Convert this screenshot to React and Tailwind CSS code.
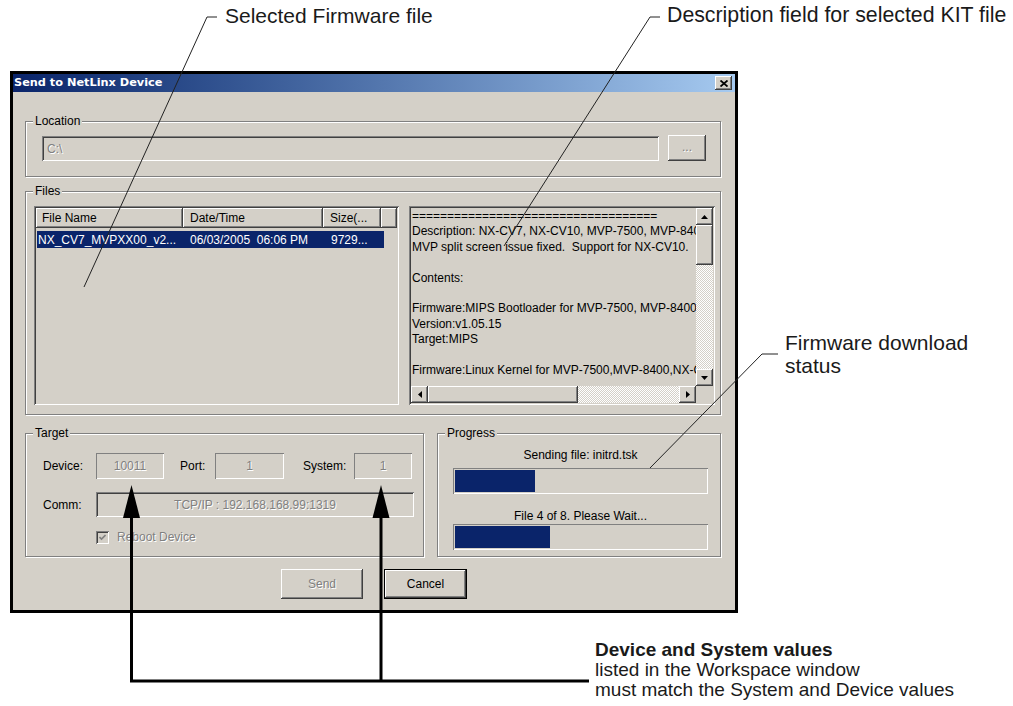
const sunken =
  "shadow-[inset_1px_1px_0_#808080,inset_-1px_-1px_0_#ffffff,inset_2px_2px_0_#404040,inset_-2px_-2px_0_#d4d0c8]";
const raised =
  "shadow-[inset_-1px_-1px_0_#404040,inset_1px_1px_0_#ffffff,inset_-2px_-2px_0_#808080,inset_2px_2px_0_#d4d0c8]";
const edge = "shadow-[inset_1px_1px_0_#808080,inset_-1px_-1px_0_#ffffff]";
const dim = "text-[#808080] [text-shadow:1px_1px_0_#ffffff]";
const checker =
  "bg-[repeating-conic-gradient(#d4d0c8_0%_25%,#ffffff_0%_50%)] bg-[length:2px_2px]";

function Tri({ dir }) {
  const horiz = dir === "left" || dir === "right";
  const pts = {
    up: "0,4 3.5,0 7,4",
    down: "0,0 7,0 3.5,4",
    left: "4,0 4,7 0,3.5",
    right: "0,0 0,7 4,3.5",
  }[dir];
  return (
    <svg width={horiz ? 4 : 7} height={horiz ? 7 : 4} viewBox={horiz ? "0 0 4 7" : "0 0 7 4"}>
      <polygon points={pts} fill="#000" />
    </svg>
  );
}

function ScrollBtn({ dir }) {
  return (
    <div className={`flex h-[17px] w-[17px] shrink-0 items-center justify-center bg-[#d4d0c8] ${raised}`}>
      <Tri dir={dir} />
    </div>
  );
}

function Group({ label, className, children }) {
  return (
    <div className={`relative border border-[#808080] shadow-[inset_1px_1px_0_#ffffff,1px_1px_0_#ffffff] ${className}`}>
      <span className="absolute -top-[8px] left-[7px] bg-[#d4d0c8] px-[2px] leading-[14px]">{label}</span>
      {children}
    </div>
  );
}

const descLines = [
  "===================================",
  "Description: NX-CV7, NX-CV10, MVP-7500, MVP-8400",
  "MVP split screen issue fixed.  Support for NX-CV10.",
  "",
  "Contents:",
  "",
  "Firmware:MIPS Bootloader for MVP-7500, MVP-8400",
  "Version:v1.05.15",
  "Target:MIPS",
  "",
  "Firmware:Linux Kernel for MVP-7500,MVP-8400,NX-CV7",
];

function Dialog() {
  return (
    <div className="flex h-[542px] w-[728px] flex-col border-[3px] border-black bg-[#d4d0c8] text-[12px] text-black">
      {/* title bar */}
      <div className="flex h-[18px] items-center justify-between bg-linear-to-r from-[#0a246a] to-[#a6caf0] pl-[1px] pr-[3px]">
        <span className="font-['DejaVu_Sans',sans-serif] text-[11.3px] font-bold text-white">Send to NetLinx Device</span>
        <div className={`flex h-[14px] w-[17px] items-center justify-center bg-[#d4d0c8] ${raised}`}>
          <svg width="8" height="7" viewBox="0 0 8 7">
            <path d="M0.5 0.5 L7.5 6.5 M7.5 0.5 L0.5 6.5" stroke="#000" strokeWidth="1.8" />
          </svg>
        </div>
      </div>

      <div className="flex-1 px-[12px] pt-[29px]">
        {/* Location */}
        <Group label="Location" className="h-[56px] w-[696px]">
          <div className="flex items-start pl-[16px] pt-[13px]">
            <div className={`mt-[1px] flex h-[25px] w-[617px] items-center pl-[5px] ${sunken} ${dim}`}>C:\</div>
            <div className={`ml-[9px] flex h-[26px] w-[38px] items-center justify-center pb-[2px] ${raised} ${dim}`}>...</div>
          </div>
        </Group>

        {/* Files */}
        <Group label="Files" className="mt-[14px] h-[224px] w-[696px]">
          <div className="flex gap-[10px] pl-[8px] pt-[14px]">
            <div className={`h-[199px] w-[365px] p-[2px] ${sunken}`}>
              <div className="flex h-[20px]">
                <div className={`flex w-[147px] items-center pl-[6px] ${raised}`}>File Name</div>
                <div className={`flex w-[140px] items-center pl-[7px] ${raised}`}>Date/Time</div>
                <div className={`flex w-[58px] items-center pl-[7px] ${raised}`}>Size(...</div>
                <div className={`flex-1 ${raised}`} />
              </div>
              <div className="ml-[1px] mt-[3px] flex h-[17px] w-[347px] items-center bg-[#0a246a] text-white">
                <div className="w-[146px] pl-[1px]">NX_CV7_MVPXX00_v2...</div>
                <div className="w-[140px] whitespace-pre pl-[7px]">06/03/2005  06:06 PM</div>
                <div className="pl-[8px]">9729...</div>
              </div>
            </div>

            <div className={`flex h-[199px] w-[306px] flex-col p-[2px] ${sunken}`}>
              <div className="flex h-[178px]">
                <div className="flex-1 overflow-hidden whitespace-pre pl-[1px] pt-[1px] leading-[15.4px]">
                  {descLines.map((l, i) => (
                    <div key={i} className="h-[15.4px]">{l}</div>
                  ))}
                </div>
                <div className="flex w-[17px] flex-col">
                  <ScrollBtn dir="up" />
                  <div className={`h-[40px] bg-[#d4d0c8] ${raised}`} />
                  <div className={`flex-1 ${checker}`} />
                  <ScrollBtn dir="down" />
                </div>
              </div>
              <div className="flex h-[17px]">
                <ScrollBtn dir="left" />
                <div className={`w-[150px] bg-[#d4d0c8] ${raised}`} />
                <div className={`flex-1 ${checker}`} />
                <ScrollBtn dir="right" />
                <div className="w-[17px]" />
              </div>
            </div>
          </div>
        </Group>

        {/* Target + Progress */}
        <div className="mt-[18px] flex gap-[13px]">
          <Group label="Target" className="h-[124px] w-[399px]">
            <div className="pl-[17px] pt-[19px]">
              <div className="flex h-[26px] items-center">
                <span className="w-[53px]">Device:</span>
                <div className={`flex h-[26px] w-[68px] items-center justify-center ${edge} ${dim}`}>10011</div>
                <span className="ml-[16px] w-[35px]">Port:</span>
                <div className={`flex h-[26px] w-[69px] items-center justify-center ${edge} ${dim}`}>1</div>
                <span className="ml-[19px] w-[51px]">System:</span>
                <div className={`flex h-[26px] w-[58px] items-center justify-center ${edge} ${dim}`}>1</div>
              </div>
              <div className="mt-[13px] flex h-[25px] items-center">
                <span className="w-[53px]">Comm:</span>
                <div className={`flex h-[25px] w-[318px] items-center justify-center ${sunken} ${dim}`}>
                  TCP/IP : 192.168.168.99:1319
                </div>
              </div>
              <div className="ml-[53px] mt-[11px] flex items-center">
                <div className={`flex h-[13px] w-[13px] items-center justify-center ${sunken}`}>
                  <svg width="7" height="7" viewBox="0 0 7 7">
                    <path d="M0.5 3 L2.5 5 L6.5 1" stroke="#808080" strokeWidth="1.6" fill="none" />
                  </svg>
                </div>
                <span className={`ml-[8px] ${dim}`}>Reboot Device</span>
              </div>
            </div>
          </Group>

          <Group label="Progress" className="h-[124px] w-[284px]">
            <div className="w-[270px] pl-[15px] pt-[14px]">
              <div className="h-[14px] text-center leading-[14px]">Sending file: initrd.tsk</div>
              <div className={`mt-[6px] h-[26px] p-[2px] ${edge}`}>
                <div className="h-full w-[80px] bg-[#0a246a]" />
              </div>
              <div className="mt-[15px] h-[14px] text-center leading-[14px]">File 4 of 8. Please Wait...</div>
              <div className={`mt-[1px] h-[26px] p-[2px] ${edge}`}>
                <div className="h-full w-[95px] bg-[#0a246a]" />
              </div>
            </div>
          </Group>
        </div>

        {/* Buttons */}
        <div className="mt-[12px] flex justify-center gap-[21px]">
          <div className={`flex h-[30px] w-[82px] items-center justify-center ${raised} ${dim}`}>Send</div>
          <div className="h-[30px] w-[83px] border border-black">
            <div className={`flex h-full w-full items-center justify-center ${raised}`}>Cancel</div>
          </div>
        </div>
      </div>
    </div>
  );
}

export default function App() {
  return (
    <div className="relative h-[706px] w-[1013px] overflow-hidden bg-white pl-[10px] pt-[71px] font-['Liberation_Sans',Arial,sans-serif]">
      <Dialog />

      {/* callouts */}
      <div className="absolute left-[225px] top-[5px] text-[21px] leading-[21px] text-[#1a1a1a]">Selected Firmware file</div>
      <div className="absolute left-[667px] top-[5px] text-[21.3px] leading-[21px] text-[#1a1a1a]">Description field for selected KIT file</div>
      <div className="absolute left-[785px] top-[331px] text-[21px] leading-[23px] text-[#1a1a1a]">
        Firmware download
        <br />
        status
      </div>
      <div className="absolute left-[595px] top-[640px] text-[19px] leading-[20px] text-[#1a1a1a]">
        <div className="font-bold">Device and System values</div>
        <div>listed in the Workspace window</div>
        <div>must match the System and Device values</div>
      </div>

      <svg className="pointer-events-none absolute left-0 top-0" width="1013" height="706">
        <g stroke="#222" strokeWidth="1" fill="none">
          <path d="M217 17 H207 L84 287" />
          <path d="M660 17 H650 L504 246" />
          <path d="M778 354 H762 L650 468" />
        </g>
        <g stroke="#000" strokeWidth="3" fill="none">
          <path d="M131.5 515 V681 H589" />
          <path d="M381 515 V681" />
        </g>
        <polygon points="131.5,485 123,518 140,518" fill="#000" />
        <polygon points="381,485 372.5,518 389.5,518" fill="#000" />
      </svg>
    </div>
  );
}
